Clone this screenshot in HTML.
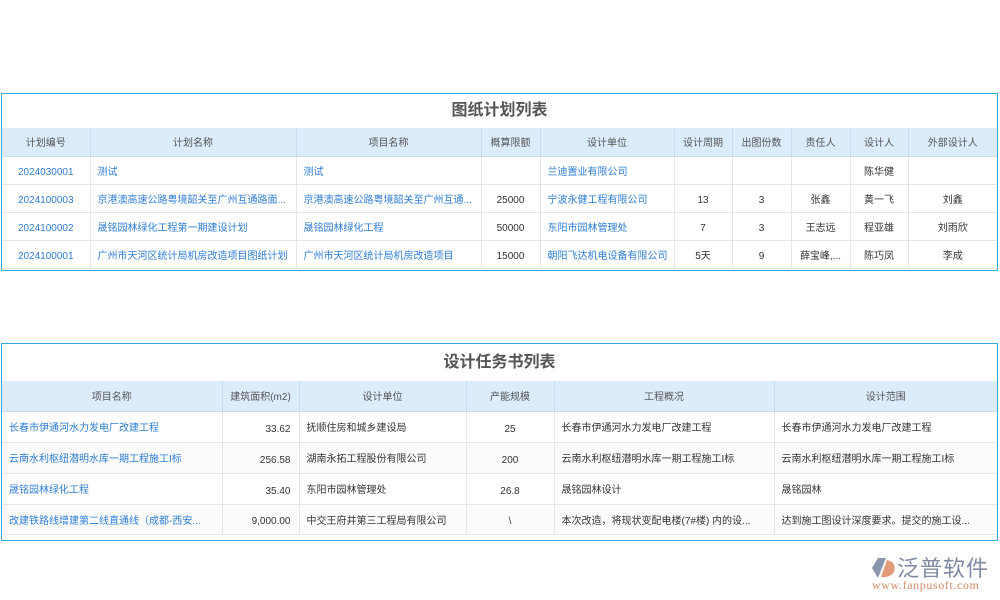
<!DOCTYPE html><html><head><meta charset="utf-8"><style>
body{margin:0;width:1000px;height:600px;background:#fff;font-family:"Liberation Sans","Noto Sans CJK SC",sans-serif;font-size:10px;color:#333;position:relative;overflow:hidden}
.box{position:absolute;left:1px;width:995px;border:1px solid #36a9e1;background:#fff}
.t{text-align:center;font-weight:bold;font-size:16px;color:#555}
table{border-collapse:collapse;width:100%;table-layout:fixed}
th{background:#dcecfa;font-weight:normal;color:#555;border-left:1px solid #c8ddef;border-bottom:1px solid #c8ddef}
td{border-left:1px solid #e6e6e6;border-bottom:1px solid #e6e6e6;white-space:nowrap;overflow:hidden;text-overflow:ellipsis}
th:first-child,td:first-child{border-left:none}
.b{color:#2e7dd6}.c{text-align:center}.r{text-align:right;padding-right:8px}.l{padding-left:7px}
.n{padding-top:6px}
tr.a td{background:#fbfbfb}
</style></head><body>
<div class="box" style="top:93px;height:176px">
<div class="t" style="height:34px;line-height:34px">图纸计划列表</div>
<table><colgroup><col style="width:88px"><col style="width:206px"><col style="width:185px"><col style="width:59px"><col style="width:134px"><col style="width:58px"><col style="width:59px"><col style="width:59px"><col style="width:58px"><col></colgroup>
<tr style="height:28px"><th>计划编号</th><th>计划名称</th><th>项目名称</th><th>概算限额</th><th>设计单位</th><th>设计周期</th><th>出图份数</th><th>责任人</th><th>设计人</th><th>外部设计人</th></tr>
<tr style="height:28px"><td class="c b n">2024030001</td><td class="l b">测试</td><td class="l b">测试</td><td></td><td class="l b">兰迪置业有限公司</td><td></td><td></td><td></td><td class="c">陈华健</td><td></td></tr>
<tr style="height:28px"><td class="c b n">2024100003</td><td class="l b">京港澳高速公路粤境韶关至广州互通路面...</td><td class="l b">京港澳高速公路粤境韶关至广州互通...</td><td class="c n">25000</td><td class="l b">宁波永健工程有限公司</td><td class="c n">13</td><td class="c n">3</td><td class="c">张鑫</td><td class="c">黄一飞</td><td class="c">刘鑫</td></tr>
<tr style="height:28px"><td class="c b n">2024100002</td><td class="l b">晟铭园林绿化工程第一期建设计划</td><td class="l b">晟铭园林绿化工程</td><td class="c n">50000</td><td class="l b">东阳市园林管理处</td><td class="c n">7</td><td class="c n">3</td><td class="c">王志远</td><td class="c">程亚雄</td><td class="c">刘雨欣</td></tr>
<tr style="height:28px"><td class="c b n">2024100001</td><td class="l b" style="text-overflow:clip">广州市天河区统计局机房改造项目图纸计划</td><td class="l b">广州市天河区统计局机房改造项目</td><td class="c n">15000</td><td class="l b" style="text-overflow:clip">朝阳飞达机电设备有限公司</td><td class="c">5天</td><td class="c n">9</td><td class="c">薛宝峰,...</td><td class="c">陈巧凤</td><td class="c">李成</td></tr>
</table></div>
<div class="box" style="top:343px;height:196px">
<div class="t" style="height:37px;line-height:37px">设计任务书列表</div>
<table><colgroup><col style="width:220px"><col style="width:77px"><col style="width:167px"><col style="width:88px"><col style="width:220px"><col></colgroup>
<tr style="height:30px"><th>项目名称</th><th>建筑面积(m2)</th><th>设计单位</th><th>产能规模</th><th>工程概况</th><th>设计范围</th></tr>
<tr style="height:31px"><td class="l b">长春市伊通河水力发电厂改建工程</td><td class="r n">33.62</td><td class="l">抚顺住房和城乡建设局</td><td class="c n">25</td><td class="l">长春市伊通河水力发电厂改建工程</td><td class="l">长春市伊通河水力发电厂改建工程</td></tr>
<tr class="a" style="height:31px"><td class="l b">云南水利枢纽潜明水库一期工程施工I标</td><td class="r n">256.58</td><td class="l">湖南永拓工程股份有限公司</td><td class="c n">200</td><td class="l">云南水利枢纽潜明水库一期工程施工I标</td><td class="l">云南水利枢纽潜明水库一期工程施工I标</td></tr>
<tr style="height:31px"><td class="l b">晟铭园林绿化工程</td><td class="r n">35.40</td><td class="l">东阳市园林管理处</td><td class="c n">26.8</td><td class="l">晟铭园林设计</td><td class="l">晟铭园林</td></tr>
<tr class="a" style="height:30px"><td class="l b">改建铁路线增建第二线直通线（成都-西安...</td><td class="r n">9,000.00</td><td class="l">中交王府井第三工程局有限公司</td><td class="c n">\</td><td class="l">本次改造，将现状变配电楼(7#楼) 内的设...</td><td class="l">达到施工图设计深度要求。提交的施工设...</td></tr>
</table></div>
<svg style="position:absolute;left:870px;top:556px" width="28" height="24" viewBox="0 0 28 24"><path d="M8 2 L16 2 L8 22 L2 12Z" fill="#8a96ad"/><path d="M17 4 Q27 6 24 16 Q20 22 11 21Z" fill="#e39a78"/></svg>
<div style="position:absolute;left:897px;top:551px;font-size:22px;color:#7f8aa3;letter-spacing:1px;font-family:'Noto Sans CJK SC',sans-serif">泛普软件</div>
<div style="position:absolute;left:872px;top:578px;font-size:12px;letter-spacing:0.6px;color:#d88a66;font-family:'Liberation Serif',serif">www.fanpusoft.com</div>
</body></html>
